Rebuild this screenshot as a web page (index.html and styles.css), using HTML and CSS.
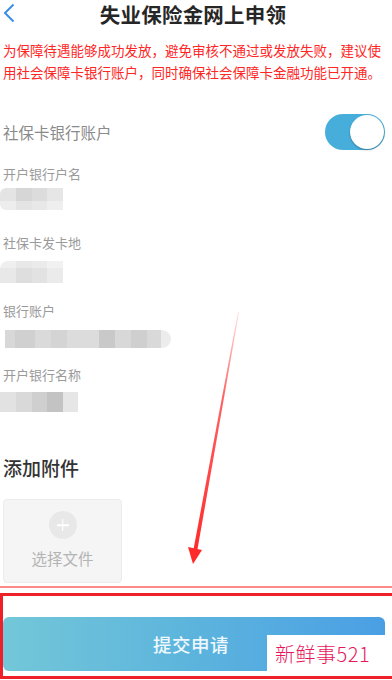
FILE: index.html
```html
<!DOCTYPE html>
<html lang="zh-CN">
<head>
<meta charset="utf-8">
<title>失业保险金网上申领</title>
<link rel="stylesheet" href="styles.css">
</head>
<body>
<div class="page">
  <header class="header">
    <svg class="back" width="12" height="20" viewBox="0 0 12 20"><path d="M10.5 1.5 L2 10 L10.5 18.5" fill="none" stroke="#3b8ee8" stroke-width="2"/></svg>
    <h1 class="title">失业保险金网上申领</h1>
  </header>
  <p class="notice">为保障待遇能够成功发放，避免审核不通过或发放失败，建议使用社会保障卡银行账户，同时确保社会保障卡金融功能已开通。</p>

  <div class="switch-row">
    <span class="switch-label">社保卡银行账户</span>
    <span class="toggle"><span class="knob"></span></span>
  </div>

  <div class="field f1">
    <div class="label">开户银行户名</div>
    <div class="blob blob1"></div>
  </div>
  <div class="field f2">
    <div class="label">社保卡发卡地</div>
    <div class="blob blob2"></div>
  </div>
  <div class="field f3">
    <div class="label">银行账户</div>
    <div class="blob blob3"></div>
  </div>
  <div class="field f4">
    <div class="label">开户银行名称</div>
    <div class="blob blob4"></div>
  </div>

  <h2 class="attach-title">添加附件</h2>
  <div class="upload">
    <span class="plus"></span>
    <span class="upload-text">选择文件</span>
  </div>

  <div class="mark-line"></div>
  <div class="mark-box">
    <button class="submit">提交申请</button>
  </div>

  <div class="watermark">新鲜事521</div>
  <svg class="arrow" width="392" height="680" viewBox="0 0 392 680">
    <defs>
      <linearGradient id="g" x1="0" y1="0" x2="0" y2="1">
        <stop offset="0" stop-color="#ff3b3b" stop-opacity="0.15"/>
        <stop offset="0.35" stop-color="#ff3b3b" stop-opacity="0.8"/>
        <stop offset="1" stop-color="#ff2a2a" stop-opacity="1"/>
      </linearGradient>
    </defs>
    <polygon points="238,312 239,312 197,552 193,552" fill="url(#g)"/>
    <polygon points="193,564 188,547 202,550" fill="#ff2a2a"/>
  </svg>
</div>
</body>
</html>
```

FILE: styles.css
```css
html, body {
  margin: 0;
  padding: 0;
  background: #fff;
}
body {
  font-family: "Noto Sans CJK SC", "Noto Sans", sans-serif;
  width: 392px;
  height: 680px;
  overflow: hidden;
}
.page {
  position: relative;
  width: 392px;
  height: 680px;
}
.header {
  position: relative;
  height: 28px;
  display: flex;
  align-items: center;
  justify-content: center;
}
.back {
  position: absolute;
  left: 3px;
  top: 3px;
}
.title {
  margin: 0;
  font-size: 20.5px;
  font-weight: 700;
  color: #262626;
  line-height: 28px;
  letter-spacing: 0.2px;
  padding-right: 6px;
}
.notice {
  margin: 11px 0 0 3px;
  width: 386px;
  font-size: 13.5px;
  line-height: 22px;
  color: #ff2626;
}
.switch-row {
  margin-top: 31px;
  height: 36px;
  display: flex;
  align-items: center;
  justify-content: space-between;
  padding: 0 7px 0 3px;
}
.switch-label {
  font-size: 15.5px;
  color: #8a8a8a;
}
.toggle {
  position: relative;
  width: 60px;
  height: 36px;
  border-radius: 18px;
  background: #47aedc;
}
.knob {
  position: absolute;
  right: 1px;
  top: 1px;
  width: 34px;
  height: 34px;
  border-radius: 50%;
  background: #fff;
  box-shadow: 0 1px 2px rgba(0,0,0,0.3);
}
.field {
  padding-left: 3px;
}
.label {
  font-size: 13px;
  line-height: 20px;
  color: #9a9a9a;
}
.f1 { margin-top: 14px; }
.f2 { margin-top: 23px; }
.f3 { margin-top: 18px; }
.f4 { margin-top: 17px; }
.blob {
  margin-left: -3px;
  border-radius: 6px 0 0 6px;
}
.blob1 {
  margin-top: 4px;
  width: 63px;
  height: 22px;
  background:
    linear-gradient(to bottom, rgba(255,255,255,0) 60%, rgba(255,255,255,0.35) 60%),
    linear-gradient(to right, #e4e4e4 0 16px, #d6d6d6 16px 32px, #dcdcdc 32px 47px, #e6e6e6 47px);
}
.blob2 {
  margin-top: 8px;
  width: 63px;
  height: 22px;
  border-radius: 8px 0 0 0;
  background:
    linear-gradient(to bottom, rgba(255,255,255,0.3) 30%, rgba(255,255,255,0) 30%),
    linear-gradient(to right, #e8e8e8 0 16px, #dedede 16px 32px, #e2e2e2 32px 47px, #ebebeb 47px);
}
.blob3 {
  margin-top: 9px;
  margin-left: 2px;
  width: 166px;
  height: 18px;
  border-radius: 0 9px 9px 0;
  background: linear-gradient(to right,
    #d8d8d8 0 10px, #d0d0d0 10px 30px, #dadada 30px 46px, #d4d4d4 46px 62px,
    #dcdcdc 62px 94px, #c9c9c9 94px 110px, #d8d8d8 110px 126px, #cfcfcf 126px 142px,
    #d9d9d9 142px 156px, #ececec 156px);
}
.blob4 {
  margin-top: 7px;
  width: 78px;
  height: 20px;
  border-radius: 0;
  background: linear-gradient(to right,
    #e2e2e2 0 16px, #d9d9d9 16px 32px, #cfcfcf 32px 47px, #c3c3c3 47px 63px, #e6e6e6 63px);
}
.attach-title {
  margin: 43px 0 0 3px;
  font-size: 19px;
  line-height: 26px;
  font-weight: 500;
  color: #333;
}
.upload {
  margin: 18px 0 0 3px;
  width: 117px;
  height: 82px;
  border: 1px solid #ececec;
  border-radius: 4px;
  background: #f5f5f5;
  display: flex;
  flex-direction: column;
  align-items: center;
  box-sizing: content-box;
}
.plus {
  position: relative;
  margin-top: 11px;
  width: 28px;
  height: 28px;
  border-radius: 50%;
  background: #e8e8e8;
}
.plus::before, .plus::after {
  content: "";
  position: absolute;
  background: #fff;
  left: 50%;
  top: 50%;
  transform: translate(-50%, -50%);
}
.plus::before { width: 12px; height: 1.5px; }
.plus::after { width: 1.5px; height: 12px; }
.upload-text {
  margin-top: 8px;
  font-size: 15.5px;
  line-height: 22px;
  color: #b4b4b4;
}
.mark-line {
  margin-top: 3px;
  height: 2px;
  background: #ff8a8a;
}
.mark-box {
  margin-top: 5px;
  height: 59px;
  border: 3px solid #f0202a;
  border-right: none;
  padding-top: 21px;
  box-sizing: content-box;
}
.submit {
  display: block;
  width: 382px;
  height: 54px;
  border: none;
  border-radius: 6px;
  background: linear-gradient(to right, #73c7d8, #5cb4dd 50%, #4a9fe4);
  color: #eef8fc;
  font-family: "Noto Sans CJK SC", "Noto Sans", sans-serif;
  font-size: 18.5px;
  font-weight: 500;
  letter-spacing: 0.5px;
  padding: 0 6px 0 0;
}
.watermark {
  position: absolute;
  left: 267px;
  top: 635px;
  width: 125px;
  height: 38px;
  background: #fff;
  color: #e8175d;
  font-family: "Noto Sans CJK SC", serif;
  font-size: 20px;
  font-weight: 300;
  line-height: 38px;
  padding-left: 8px;
  box-sizing: border-box;
  letter-spacing: 0.5px;
}
.arrow {
  position: absolute;
  left: 0;
  top: 0;
  pointer-events: none;
}
```
